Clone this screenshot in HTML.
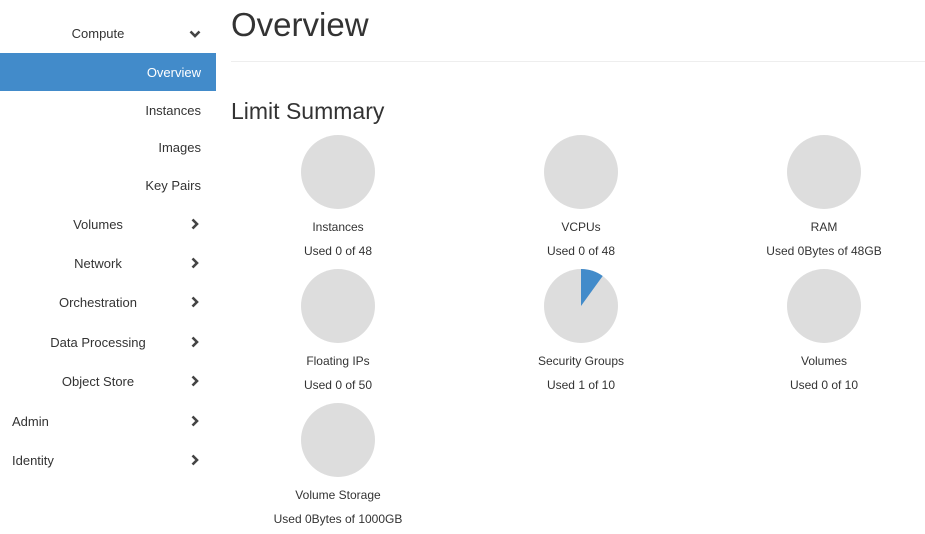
<!DOCTYPE html>
<html><head><style>
body{margin:0;width:925px;height:534px;background:#fff;font-family:"Liberation Sans",sans-serif;color:#333;position:relative;overflow:hidden}
.t{position:absolute;font-size:13px;line-height:16px;white-space:nowrap}
.c{position:absolute;font-size:12px;line-height:14px;white-space:nowrap;text-align:center;width:240px}
.chev{position:absolute;left:189px;width:12px;height:12px}
</style></head><body>
<div style="position:absolute;left:0;top:53px;width:216px;height:38px;background:#428bca"></div>
<div class="t" style="left:0;width:196px;text-align:center;top:26px">Compute</div>
<svg class="chev" style="top:28px" viewBox="0 0 12 12"><path d="M1.5 3.5 L6 8 L10.5 3.5" stroke="#444" stroke-width="2.6" fill="none"/></svg>
<div class="t" style="right:724px;top:65px;color:#fff">Overview</div>
<div class="t" style="right:724px;top:103px">Instances</div>
<div class="t" style="right:724px;top:140px">Images</div>
<div class="t" style="right:724px;top:178px">Key Pairs</div>
<div class="t" style="left:0;width:196px;text-align:center;top:217px">Volumes</div>
<div class="t" style="left:0;width:196px;text-align:center;top:256px">Network</div>
<div class="t" style="left:0;width:196px;text-align:center;top:295px">Orchestration</div>
<div class="t" style="left:0;width:196px;text-align:center;top:335px">Data Processing</div>
<div class="t" style="left:0;width:196px;text-align:center;top:374px">Object Store</div>
<div class="t" style="left:12px;top:414px">Admin</div>
<div class="t" style="left:12px;top:453px">Identity</div>
<svg class="chev" style="top:218px" viewBox="0 0 12 12"><path d="M3.5 1.5 L8 6 L3.5 10.5" stroke="#444" stroke-width="2.6" fill="none"/></svg>
<svg class="chev" style="top:257px" viewBox="0 0 12 12"><path d="M3.5 1.5 L8 6 L3.5 10.5" stroke="#444" stroke-width="2.6" fill="none"/></svg>
<svg class="chev" style="top:296px" viewBox="0 0 12 12"><path d="M3.5 1.5 L8 6 L3.5 10.5" stroke="#444" stroke-width="2.6" fill="none"/></svg>
<svg class="chev" style="top:336px" viewBox="0 0 12 12"><path d="M3.5 1.5 L8 6 L3.5 10.5" stroke="#444" stroke-width="2.6" fill="none"/></svg>
<svg class="chev" style="top:375px" viewBox="0 0 12 12"><path d="M3.5 1.5 L8 6 L3.5 10.5" stroke="#444" stroke-width="2.6" fill="none"/></svg>
<svg class="chev" style="top:415px" viewBox="0 0 12 12"><path d="M3.5 1.5 L8 6 L3.5 10.5" stroke="#444" stroke-width="2.6" fill="none"/></svg>
<svg class="chev" style="top:454px" viewBox="0 0 12 12"><path d="M3.5 1.5 L8 6 L3.5 10.5" stroke="#444" stroke-width="2.6" fill="none"/></svg>
<div style="position:absolute;left:231px;top:5px;font-size:33px;line-height:40px">Overview</div>
<div style="position:absolute;left:231px;top:61px;width:694px;height:1px;background:#eee"></div>
<div style="position:absolute;left:231px;top:97px;font-size:23px;line-height:28px">Limit Summary</div>
<svg style="position:absolute;left:0;top:0" width="925" height="534">
<g fill="#ddd">
<circle cx="338" cy="172" r="37"/><circle cx="581" cy="172" r="37"/><circle cx="824" cy="172" r="37"/>
<circle cx="338" cy="306" r="37"/><circle cx="581" cy="306" r="37"/><circle cx="824" cy="306" r="37"/>
<circle cx="338" cy="440" r="37"/></g>
<path d="M581 306 L581 269 A37 37 0 0 1 602.7 276 Z" fill="#428bca"/>
</svg>
<div class="c" style="left:218px;top:220px">Instances</div><div class="c" style="left:218px;top:244px">Used 0 of 48</div>
<div class="c" style="left:461px;top:220px">VCPUs</div><div class="c" style="left:461px;top:244px">Used 0 of 48</div>
<div class="c" style="left:704px;top:220px">RAM</div><div class="c" style="left:704px;top:244px">Used 0Bytes of 48GB</div>
<div class="c" style="left:218px;top:354px">Floating IPs</div><div class="c" style="left:218px;top:378px">Used 0 of 50</div>
<div class="c" style="left:461px;top:354px">Security Groups</div><div class="c" style="left:461px;top:378px">Used 1 of 10</div>
<div class="c" style="left:704px;top:354px">Volumes</div><div class="c" style="left:704px;top:378px">Used 0 of 10</div>
<div class="c" style="left:218px;top:488px">Volume Storage</div><div class="c" style="left:218px;top:512px">Used 0Bytes of 1000GB</div>
</body></html>
